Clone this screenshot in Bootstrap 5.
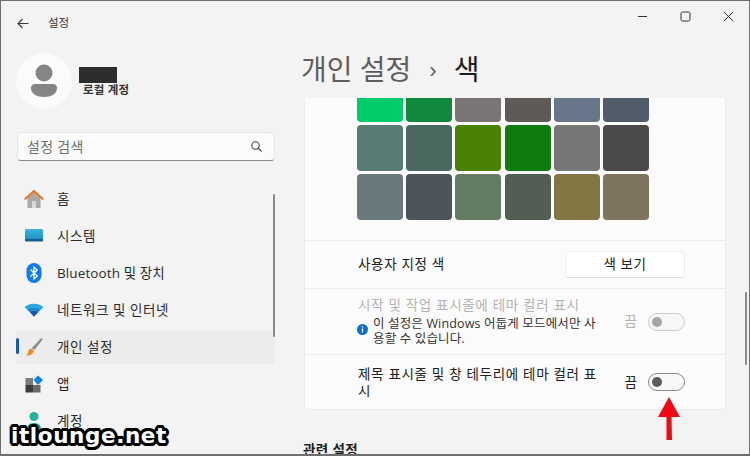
<!DOCTYPE html>
<html lang="ko">
<head>
  <meta charset="UTF-8">
  <title>설정</title>
  <link href="https://cdn.jsdelivr.net/npm/bootstrap@5.3.2/dist/css/bootstrap.min.css" rel="stylesheet">
  <style>
    html, body { height: 100%; }
    body {
      margin: 0;
      overflow: hidden;
      background: #f3f3f3;
      font-family: "Open Sans", "Noto Sans CJK KR", sans-serif;
      font-size: 14px;
      color: #202020;
    }
    .app-window {
      position: relative;
      width: 750px;
      height: 456px;
      overflow: hidden;
      border: 1px solid #6f6f6f;
      border-bottom-width: 2px;
      background: #f3f3f3;
    }
    .side-pane { width: 287px; flex: none; padding: 0 13px 0 15px; }
    .back-row { height: 44px; font-size: 11.5px; color: #333; }
    .back-row svg { margin: 0 19px 0 1px; }
    .profile-row { height: 87px; padding-top: 8px; }
    .avatar-disc {
      width: 56px; height: 56px; border-radius: 50%;
      background: #fbfbfb; flex: none;
    }
    .name-block { width: 38px; height: 16px; background: #2d2d2d; margin: 14px 0 0 7px; }
    .account-label { font-size: 11.5px; font-weight: 700; margin: 0 0 0 11px; line-height: 14px; color: #333; letter-spacing: .2px; }
    .search-box {
      height: 29px; width: 258px; padding: 0 12px 0 9px;
      margin-left: 1px;
      background: #fbfbfb;
      border: 1px solid #e6e6e6; border-bottom-color: #8a8a8a;
      border-radius: 4px;
      font-size: 14px; color: #6d6d6d; letter-spacing: .3px;
    }
    .side-nav { margin-top: 21px; width: 259px; }
    .side-item {
      position: relative;
      height: 34px; margin-bottom: 3px; padding-left: 8px;
      border-radius: 4px;
      color: #2b2b2b; font-size: 13.5px; letter-spacing: .55px;
    }
    .side-item svg { width: 20px; height: 20px; margin-right: 13px; flex: none; }
    .side-item.is-active { background: #ececec; }
    .side-item.is-active::before {
      content: ""; position: absolute; left: 0; top: 8px;
      width: 3px; height: 16px; border-radius: 2px; background: #0f5cb5;
    }
    .latin-item { letter-spacing: .1px; }
    .side-thumb { position: absolute; left: 272px; top: 193px; width: 2px; height: 143px; background: #8a8a8a; border-radius: 1px; }
    .main-pane { flex: 1; min-width: 0; padding-left: 16px; }
    .win-controls { height: 30px; padding: 0 15px 0 0; gap: 32px; }
    .win-controls svg { width: 11px; height: 11px; }
    .page-title { height: 67px; padding-top: 8px; font-size: 28px; line-height: 60px; color: #5e5e5e; margin-left: -3px; white-space: nowrap; }
    .page-title .crumb-sep { font-size: 22px; margin: 0 17px 0 18px; position: relative; top: -2px; font-family: "Liberation Sans", sans-serif; }
    .page-title .crumb-now { color: #1d1d1d; }
    .setting-card {
      width: 422px;
      background: #fbfbfb;
      border: 1px solid #ececec;
      border-top: 0;
      border-radius: 0 0 5px 5px;
    }
    .swatch-grid {
      display: grid;
      grid-template-columns: repeat(6, 46px);
      gap: 3px 3.2px;
      padding: 0 0 20px 52px;
      height: 142px;
    }
    .swatch-cell { height: 46px; border-radius: 4px; }
    .swatch-cut { height: 24px; border-radius: 0 0 4px 4px; }
    .setting-row { border-top: 1px solid #ececec; padding: 0 40px 0 53px; }
    .row-custom { height: 48px; }
    .row-disabled { height: 66px; }
    .row-title { height: 55px; }
    .see-btn {
      flex: none;
      width: 120px; height: 27px; padding: 0;
      font-size: 13.5px; line-height: 25px; color: #222; letter-spacing: .6px;
      background: #fff;
      border: 1px solid #efefef; border-bottom-color: #dcdcdc;
      border-radius: 4px;
    }
    .row-text { width: 246px; line-height: 17px; letter-spacing: .68px; font-size: 13.5px; }
    .row-label { width: auto; flex: none; }
    .row-title .row-text { padding-top: 2px; }
    .muted-text { color: #b3b3b3; }
    .info-line { font-size: 12.5px; line-height: 15px; letter-spacing: .15px; color: #333; margin-top: 2px; }
    .info-line svg { flex: none; margin: 8px 5px 0 -1px; }
    .state-label { font-size: 13.5px; margin-right: 11px; }
    .switch-track {
      position: relative;
      width: 37px; height: 18px; flex: none;
      border: 1px solid #8a8a8a; border-radius: 9px;
      background: #f7f7f7;
    }
    .switch-track::after {
      content: ""; position: absolute; left: 3px; top: 3px;
      width: 10px; height: 10px; border-radius: 50%; background: #5c5c5c;
    }
    .switch-track.is-off { border-color: #cdcdcd; }
    .switch-track.is-off::after { background: #a6a6a6; }
    .related-head { font-size: 13.5px; font-weight: 700; margin: 30px 0 0 -1px; line-height: 20px; color: #222; letter-spacing: .4px; }
    .main-thumb { position: absolute; left: 744px; top: 291px; width: 2px; height: 73px; background: #8a8a8a; border-radius: 1px; }
    .red-arrow { position: absolute; left: 656px; top: 395px; }
    .site-mark {
      position: absolute; left: 10px; top: 418px;
      font-family: "DejaVu Sans", sans-serif;
      font-weight: 700; font-size: 21.5px; line-height: 34px;
      letter-spacing: .6px;
      color: #fff;
      text-shadow:
        3px 0 0 #000, -3px 0 0 #000, 0 3px 0 #000, 0 -3px 0 #000,
        2.1px 2.1px 0 #000, -2.1px 2.1px 0 #000, 2.1px -2.1px 0 #000, -2.1px -2.1px 0 #000,
        2.8px 1.2px 0 #000, -2.8px 1.2px 0 #000, 2.8px -1.2px 0 #000, -2.8px -1.2px 0 #000,
        1.2px 2.8px 0 #000, -1.2px 2.8px 0 #000, 1.2px -2.8px 0 #000, -1.2px -2.8px 0 #000;
    }
  </style>
</head>
<body>
<div class="app-window d-flex">

  <div class="side-pane">
    <div class="back-row d-flex align-items-center">
      <svg width="12" height="11" viewBox="0 0 12 11" fill="none" stroke="#3a3a3a" stroke-width="1.1"><path d="M11.5 5.5H1M5.5 1 1 5.5 5.5 10"/></svg>
      <span>설정</span>
    </div>
    <div class="profile-row d-flex">
      <div class="avatar-disc d-flex align-items-center justify-content-center">
        <svg width="28" height="34" viewBox="0 0 28 34" fill="#858585"><circle cx="14" cy="9" r="8.5"/><path d="M1 24c0-3 2-4 5-4h16c3 0 5 1 5 4 0 6-6 9-13 9S1 30 1 24z"/></svg>
      </div>
      <div>
        <div class="name-block"></div>
        <div class="account-label">로컬 계정</div>
      </div>
    </div>
    <div class="search-box d-flex align-items-center justify-content-between">
      <span>설정 검색</span>
      <svg width="11" height="11" viewBox="0 0 11 11" fill="none" stroke="#444" stroke-width="1.1"><circle cx="4.5" cy="4.5" r="3.7"/><path d="M7.2 7.2 10.5 10.5"/></svg>
    </div>
    <nav class="side-nav">
      <div class="side-item d-flex align-items-center">
        <svg viewBox="0 0 20 20"><path fill="#a9a9a9" d="M3.5 9 10 3l6.5 6v10h-4.5v-6.500H8V19H3.500z"/><path fill="#d9d9d9" d="M8 12.500h4V19H8z"/><path fill="none" stroke="#e0782a" stroke-width="2.200" stroke-linecap="round" stroke-linejoin="round" d="M1.500 9.800 10 2l8.500 7.800"/></svg>
        <span>홈</span>
      </div>
      <div class="side-item d-flex align-items-center">
        <svg viewBox="0 0 20 20"><defs><linearGradient id="sysFill" x1="0" y1="0" x2="0" y2="1"><stop offset="0" stop-color="#38b6dc"/><stop offset="1" stop-color="#1e8cc0"/></linearGradient></defs><rect x="1" y="3" width="18" height="12" rx="1.200" fill="url(#sysFill)"/><rect x="1" y="13" width="18" height="2.500" rx="1" fill="#125f8c"/></svg>
        <span>시스템</span>
      </div>
      <div class="side-item latin-item d-flex align-items-center">
        <svg viewBox="0 0 20 20"><rect x="2.500" y="0" width="15" height="20" rx="7.500" fill="#0a7cf0"/><path fill="none" stroke="#fff" stroke-width="1.300" d="M6.500 6.500 13.200 13 10 16V4l3.200 3L6.500 13.500"/></svg>
        <span>Bluetooth 및 장치</span>
      </div>
      <div class="side-item d-flex align-items-center">
        <svg viewBox="0 0 20 20"><path fill="#28a5e0" d="M0.500 7C6 2.500 14 2.500 19.500 7l-2.500 2.500C12.500 6.500 7.500 6.500 3 9.500z"/><path fill="#1586d2" d="M3 9.500c4.500-3 9.500-3 14 0l-2.300 2.300c-3-2-6.400-2-9.400 0z"/><path fill="#0b5cb0" d="M5.300 11.800c3-2 6.400-2 9.400 0L10 16.800z"/></svg>
        <span>네트워크 및 인터넷</span>
      </div>
      <div class="side-item is-active d-flex align-items-center">
        <svg viewBox="0 0 20 20"><path fill="#8d8d8d" d="M18 1.500c.6.4.6 1 .2 1.600L10.500 13 7.800 11 16.500 1.800c.5-.5 1-.6 1.500-.3z"/><path fill="#ee8a2b" d="M7.300 11.500 10 13.600c-.5 3-3 5-8 5 1.800-1.500 2-3 2.500-4.500.5-1.500 1.500-2.500 2.800-2.600z"/></svg>
        <span>개인 설정</span>
      </div>
      <div class="side-item d-flex align-items-center">
        <svg viewBox="0 0 20 20"><rect x="1.500" y="4" width="7.500" height="7.500" fill="#7b7b7b"/><rect x="1.500" y="11" width="7.500" height="7.500" fill="#3c3c3c"/><rect x="9" y="11" width="7.500" height="7.500" fill="#6a6a6a"/><path fill="#0f86dc" d="M14 1.500 19 6l-5 5-4.500-5z"/></svg>
        <span>앱</span>
      </div>
      <div class="side-item d-flex align-items-center">
        <svg viewBox="0 0 20 20"><circle cx="10" cy="5.500" r="4.500" fill="#1fb39c"/><path fill="#1fa08c" d="M3 18c0-4 3-6 7-6s7 2 7 6z"/></svg>
        <span>계정</span>
      </div>
    </nav>
  </div>

  <div class="main-pane">
    <div class="win-controls d-flex align-items-center justify-content-end">
      <svg viewBox="0 0 11 11" stroke="#333" fill="none"><path d="M1 5.500h9"/></svg>
      <svg viewBox="0 0 11 11" stroke="#333" fill="none"><rect x="1" y="1" width="9" height="9" rx="1.500"/></svg>
      <svg viewBox="0 0 11 11" stroke="#333" fill="none"><path d="M.8.8l9.400 9.400M10.200.8.800 10.200"/></svg>
    </div>
    <div class="page-title">개인 설정<span class="crumb-sep">›</span><span class="crumb-now">색</span></div>

    <div class="card setting-card">
      <div class="swatch-grid">
        <div class="swatch-cell swatch-cut" data-c="#00cc6a"></div>
        <div class="swatch-cell swatch-cut" data-c="#10893e"></div>
        <div class="swatch-cell swatch-cut" data-c="#7a7574"></div>
        <div class="swatch-cell swatch-cut" data-c="#5d5a58"></div>
        <div class="swatch-cell swatch-cut" data-c="#68768a"></div>
        <div class="swatch-cell swatch-cut" data-c="#515c6b"></div>
        <div class="swatch-cell" data-c="#567c73"></div>
        <div class="swatch-cell" data-c="#486860"></div>
        <div class="swatch-cell" data-c="#498205"></div>
        <div class="swatch-cell" data-c="#107c10"></div>
        <div class="swatch-cell" data-c="#767676"></div>
        <div class="swatch-cell" data-c="#4c4a48"></div>
        <div class="swatch-cell" data-c="#69797e"></div>
        <div class="swatch-cell" data-c="#4a5459"></div>
        <div class="swatch-cell" data-c="#647c64"></div>
        <div class="swatch-cell" data-c="#525e54"></div>
        <div class="swatch-cell" data-c="#847545"></div>
        <div class="swatch-cell" data-c="#7e735f"></div>
      </div>

      <div class="setting-row row-custom d-flex align-items-center justify-content-between">
        <span class="row-text row-label">사용자 지정 색</span>
        <button type="button" class="btn see-btn">색 보기</button>
      </div>

      <div class="setting-row row-disabled d-flex align-items-center justify-content-between">
        <div class="row-text">
          <div class="muted-text">시작 및 작업 표시줄에 테마 컬러 표시</div>
          <div class="info-line d-flex">
            <svg width="11" height="11" viewBox="0 0 11 11"><circle cx="5.500" cy="5.500" r="5.500" fill="#0a6fd0"/><path stroke="#fff" stroke-width="1.300" d="M5.500 4.500v4M5.500 2.200v1.300"/></svg>
            <span>이 설정은 Windows 어둡게 모드에서만 사용할 수 있습니다.</span>
          </div>
        </div>
        <div class="d-flex align-items-center">
          <span class="state-label muted-text">끔</span>
          <span class="switch-track is-off"></span>
        </div>
      </div>

      <div class="setting-row row-title d-flex align-items-center justify-content-between">
        <div class="row-text">제목 표시줄 및 창 테두리에 테마 컬러 표시</div>
        <div class="d-flex align-items-center">
          <span class="state-label">끔</span>
          <span class="switch-track"></span>
        </div>
      </div>
    </div>

    <div class="related-head">관련 설정</div>
  </div>

  <div class="side-thumb"></div>
  <div class="main-thumb"></div>
  <svg class="red-arrow" width="24" height="46" viewBox="0 0 24 46"><path fill="#ee0a14" d="M12 1 23 21h-8.500l.5 23H9.500L9.500 21H1z"/></svg>
  <div class="site-mark">itlounge.net</div>
</div>

<script src="https://cdn.jsdelivr.net/npm/bootstrap@5.3.2/dist/js/bootstrap.bundle.min.js"></script>
<script>
  // palette colours come from the data-c attribute
  document.querySelectorAll(".swatch-cell").forEach(cell => {
    cell.style.backgroundColor = cell.dataset.c;
  });
</script>
</body>
</html>
